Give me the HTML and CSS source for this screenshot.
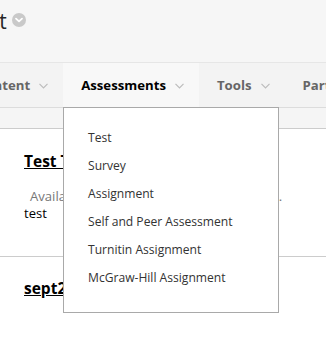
FILE: index.html
```html
<!DOCTYPE html>
<html>
<head>
<meta charset="utf-8">
<link rel="stylesheet" href="styles.css">
</head>
<body>
<div class="page">
  <header class="course-header">
    <h1 class="course-title">Test</h1>
    <span class="title-menu">
      <svg width="14" height="14" viewBox="0 0 14 14"><circle cx="7" cy="7" r="7" fill="#c9c9c9"/><path d="M4 5.6 L7 8.4 L10 5.6" fill="none" stroke="#fff" stroke-width="1.8" stroke-linecap="round" stroke-linejoin="round"/></svg>
    </span>
  </header>
  <nav class="course-nav">
    <div class="nav-item">Content<svg class="chev" width="9" height="6" viewBox="0 0 9 6"><path d="M0.5 0.8 L4.5 4.8 L8.5 0.8" fill="none" stroke="#bdbdbd" stroke-width="1.2"/></svg></div>
    <div class="nav-item active">Assessments<svg class="chev" width="9" height="6" viewBox="0 0 9 6"><path d="M0.5 0.8 L4.5 4.8 L8.5 0.8" fill="none" stroke="#bdbdbd" stroke-width="1.2"/></svg></div>
    <div class="nav-item">Tools<svg class="chev" width="9" height="6" viewBox="0 0 9 6"><path d="M0.5 0.8 L4.5 4.8 L8.5 0.8" fill="none" stroke="#bdbdbd" stroke-width="1.2"/></svg></div>
    <div class="nav-item">Partner Content<svg class="chev" width="9" height="6" viewBox="0 0 9 6"><path d="M0.5 0.8 L4.5 4.8 L8.5 0.8" fill="none" stroke="#bdbdbd" stroke-width="1.2"/></svg></div>
  </nav>
  <div class="strip"></div>
  <main class="content">
    <section class="item">
      <h3 class="item-title"><a href="#">Test Test</a></h3>
      <div class="details">Availability: Item is hidden from students.</div>
      <div class="desc">test</div>
    </section>
    <section class="item">
      <h3 class="item-title"><a href="#">sept2019</a></h3>
    </section>
  </main>
  <ul class="dropdown">
    <li>Test</li>
    <li>Survey</li>
    <li>Assignment</li>
    <li>Self and Peer Assessment</li>
    <li>Turnitin Assignment</li>
    <li>McGraw-Hill Assignment</li>
  </ul>
</div>
</body>
</html>
```
FILE: styles.css
```css
html, body {
  margin: 0;
  padding: 0;
  background: #ffffff;
  overflow: hidden;
}
body {
  font-family: "Open Sans", "DejaVu Sans", sans-serif;
  width: 326px;
  height: 339px;
}
.page {
  position: relative;
  width: 326px;
  height: 339px;
  overflow: hidden;
}
.course-header {
  height: 63px;
  box-sizing: border-box;
  background: #f6f6f6;
  border-bottom: 1px solid #e6e6e6;
  display: flex;
  align-items: flex-start;
  gap: 5px;
  margin-left: -34px;
  padding-top: 8px;
}
.course-title {
  margin: 0;
  font-size: 21px;
  font-weight: 400;
  color: #262626;
  line-height: 26px;
}
.title-menu {
  display: flex;
  margin-top: 5px;
}
.course-nav {
  display: flex;
  height: 44px;
  background: #f3f3f3;
  border-bottom: 1px solid #dcdcdc;
  margin-left: -41px;
  white-space: nowrap;
}
.nav-item {
  display: flex;
  align-items: center;
  gap: 9px;
  padding: 0 15px 0 18px;
  font-size: 13.2px;
  font-weight: 700;
  color: #666666;
}
.nav-item.active {
  background: #f8f8f8;
  color: #000000;
}
.chev {
  display: block;
  margin-top: 1px;
}
.strip {
  height: 20px;
  background: #f5f5f5;
  border-bottom: 1px solid #cccccc;
}
.content {
  background: #ffffff;
}
.item {
  padding: 21px 0 0 24px;
  border-bottom: 1px solid #cccccc;
  height: 106px;
}
.item + .item {
  border-bottom: none;
  padding-top: 20px;
}
.item-title {
  margin: 0;
  font-size: 15.5px;
  font-weight: 700;
  line-height: 22px;
}
.item-title a {
  color: #000000;
  text-decoration: underline;
}
.details {
  margin: 15px 0 0 6px;
  font-size: 13.1px;
  color: #777777;
  line-height: 18px;
  white-space: nowrap;
}
.desc {
  font-size: 13px;
  color: #000000;
  line-height: 17px;
}
.dropdown {
  position: absolute;
  left: 63px;
  top: 107px;
  margin: 0;
  padding: 16px 0 19px 24px;
  box-sizing: border-box;
  width: 216px;
  height: 206px;
  list-style: none;
  background: #ffffff;
  border: 1px solid #a9a9a9;
}
.dropdown li {
  font-size: 12.1px;
  line-height: 28px;
  color: #333333;
}
```
